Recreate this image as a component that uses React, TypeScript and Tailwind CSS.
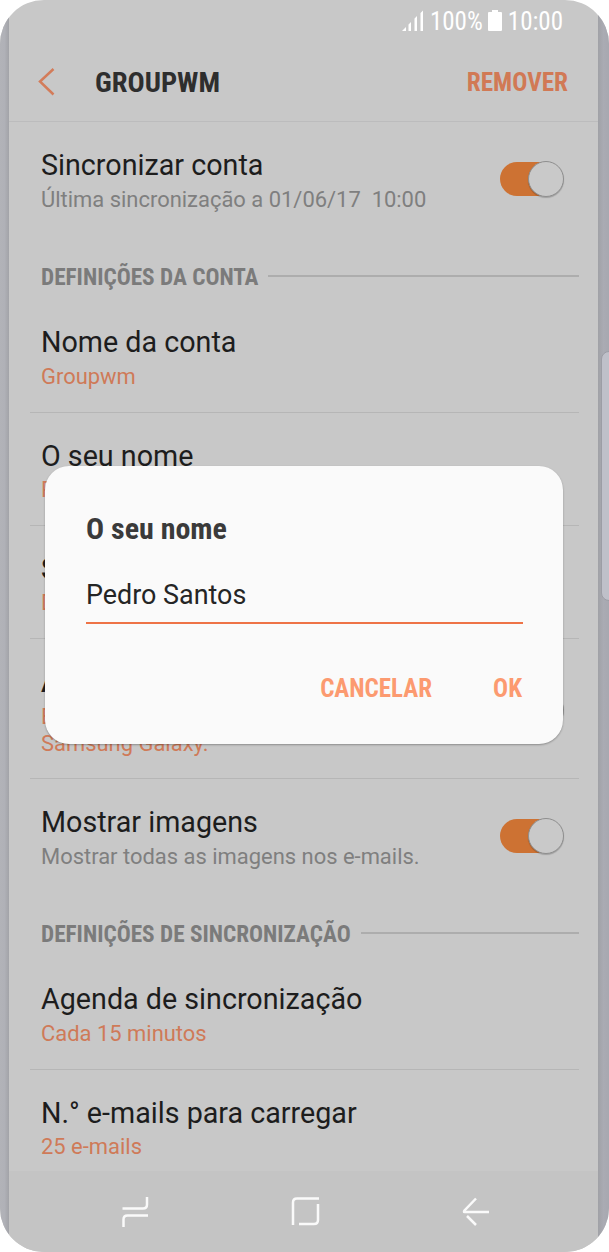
import { useState } from "react";
import clsx from "clsx";

interface SettingRowProps {
    title: string;
    summary: string;
    muted?: boolean;
    divider?: boolean;
    tall?: boolean;
    strong?: boolean;
    toggle?: boolean;
}

export default function App() {
    const [name, setName] = useState("Pedro Santos");

    return (
        <div className="w-[609px] h-[1252px] bg-white font-['Roboto','Liberation_Sans',sans-serif]">
            <div className="relative flex h-full w-full overflow-hidden rounded-[44px] bg-[#c8c8c8]">
                <div className="w-[9px] shrink-0 bg-linear-to-r from-[#b2b3b8] via-[#b0b1b7] to-[#a2a3a8]" />

                <div className="flex min-w-0 flex-1 flex-col">
                    <StatusBar />
                    <Header />

                    <main className="flex-1 overflow-hidden pr-[19px] pl-[21px]">
                        <SettingRow title="Sincronizar conta" summary={"Última sincronização a 01/06/17\u00a0 10:00"} muted toggle />
                        <SectionTitle>DEFINIÇÕES DA CONTA</SectionTitle>
                        <SettingRow title="Nome da conta" summary="Groupwm" divider />
                        <SettingRow title="O seu nome" summary="Pedro Santos" divider />
                        <SettingRow title="Sempre Cc/Bcc para mim" summary="Desativado" divider strong />
                        <SettingRow title="Assinatura" summary={"Enviado do meu smartphone\nSamsung Galaxy."} divider tall strong toggle />
                        <SettingRow title="Mostrar imagens" summary="Mostrar todas as imagens nos e-mails." muted toggle />
                        <SectionTitle>DEFINIÇÕES DE SINCRONIZAÇÃO</SectionTitle>
                        <SettingRow title="Agenda de sincronização" summary="Cada 15 minutos" divider />
                        <SettingRow title="N.° e-mails para carregar" summary="25 e-mails" />
                    </main>

                    <NavBar />
                </div>

                <div className="w-[11px] shrink-0 bg-linear-to-r from-[#a0a1a6] via-[#aaabb3] to-[#a7a8b0]" />

                {/* Edge panel handle */}
                <div className="absolute top-[351px] left-[601px] h-[250px] w-4 rounded-l-lg border border-[#9c9da5] bg-[#bfc0c9]" />

                {/* Dialog */}
                <div className="absolute top-[466px] left-[45px] flex h-[278px] w-[518px] flex-col rounded-[24px] bg-[#fafafa] px-[41px] pt-[45px] shadow-[0_1px_2px_rgba(0,0,0,0.3)]">
                    <h2 className="h-9 text-[30px] leading-9 font-bold text-[#3a3a3a] font-['Roboto_Condensed','Roboto',sans-serif] [font-stretch:75%]">
                        O seu nome
                    </h2>
                    <input
                        value={name}
                        onChange={(e) => setName(e.target.value)}
                        className="mt-[19px] h-[58px] w-[437px] border-b-2 border-[#ee7347] bg-transparent pt-0.5 text-[26.9px] text-[#252525] outline-none"
                    />
                    <div className="mt-[47px] flex justify-end gap-[61px] text-[25px] leading-9 font-bold text-[#fc9a70] font-['Roboto_Condensed','Roboto',sans-serif] [font-stretch:75%]">
                        <button>CANCELAR</button>
                        <button>OK</button>
                    </div>
                </div>
            </div>
        </div>
    );
}

function StatusBar() {
    return (
        <div className="flex h-[42px] shrink-0 items-center justify-end pr-[35px] text-[25px] text-white font-['Roboto_Condensed','Roboto',sans-serif] [font-stretch:75%]">
            <svg width="22" height="22" viewBox="0 0 22 22" fill="currentColor">
                <path d="M0 21 4 17v4zM6.500 14.500l2.500-2.500V21H6.500zM12.500 8.500l2.500-2.500V21h-2.500zM18.500 3 21 .5V21h-2.500z" />
            </svg>
            <span className="ml-[6px] pt-0.5">100%</span>
            <svg className="ml-[5px]" width="14" height="22" viewBox="0 0 14 22" fill="currentColor">
                <path d="M4 0h6v2h3q1 0 1 1v17q0 1-1 1H1q-1 0-1-1V3q0-1 1-1h3z" />
            </svg>
            <span className="ml-[6px] pt-0.5">10:00</span>
        </div>
    );
}

function Header() {
    return (
        <header className="flex h-[80px] shrink-0 items-center border-b border-[#bcbcbd] pr-[30px] pl-[29px] font-bold font-['Roboto_Condensed','Roboto',sans-serif] [font-stretch:75%]">
            <svg width="17" height="28" viewBox="0 0 17 28" fill="none" stroke="#d37c5a" strokeWidth="2.500">
                <path d="M15.500 1 2 13.500 15.500 26.500" />
            </svg>
            <h1 className="ml-10 pt-[3px] text-[28.5px] text-[#2e2e2e]">GROUPWM</h1>
            <button className="ml-auto pt-0.5 text-[25.2px] text-[#d17955]">REMOVER</button>
        </header>
    );
}

function SectionTitle({ children }: { children: string }) {
    return (
        <div className="flex h-[64px] items-center gap-2.5 pt-5 pl-[11px] text-[23.25px] font-bold text-[#7b7b7b] font-['Roboto_Condensed','Roboto',sans-serif] [font-stretch:75%]">
            <span className="whitespace-nowrap">{children}</span>
            <div className="-mt-0.5 h-0.5 flex-1 bg-[#adadad]" />
        </div>
    );
}

function SettingRow({ title, summary, muted, divider, tall, strong, toggle }: SettingRowProps) {
    return (
        <div
            className={clsx(
                "flex justify-between pr-[15px] pl-[11px]",
                tall ? "h-[140px]" : "h-[113.3px]",
                divider && "border-b border-[#b6b6b6]"
            )}
        >
            <div className="whitespace-nowrap pt-[25px]">
                <div className={clsx("h-9 text-[28.7px] leading-9 text-[#1d1d1d]", strong && "font-medium")}>{title}</div>
                <div className={clsx("whitespace-pre pt-[2.5px] text-[21.95px] leading-[27px]", muted ? "text-[#7f7f7f]" : "text-[#cf7a58]")}>
                    {summary}
                </div>
            </div>
            {toggle && <Toggle className={tall ? "mt-[52px]" : "mt-[38px]"} />}
        </div>
    );
}

function Toggle({ className }: { className: string }) {
    return (
        <div className={clsx("flex h-[37px] w-[64px] shrink-0 items-center", className)}>
            <div className="h-[34px] w-[45px] rounded-l-full bg-[#cd7233]" />
            <div className="-ml-[17px] size-9 shrink-0 rounded-full border border-[#8f8f8f] bg-[#c9c9c9] shadow-[0_1px_1px_rgba(0,0,0,0.2)]" />
        </div>
    );
}

function NavBar() {
    return (
        <nav className="flex h-[81px] shrink-0 items-center bg-[#c4c4c4] pl-[112px] text-[#fafafa]">
            <svg width="30" height="32" viewBox="0 0 30 32" fill="none" stroke="currentColor" strokeWidth="2.500">
                <path d="M1.500 12.500H22q4 0 4-4V1M27 19.500H6.500q-4 0-4 4V31" />
            </svg>
            <svg className="ml-[140px]" width="30" height="30" viewBox="0 0 30 30" fill="none" stroke="currentColor" strokeWidth="2.500">
                <path d="M2 28V5.500q0-4 4-4H28M27 7v16q0 4-4 4H8" />
            </svg>
            <svg className="ml-[141px]" width="28" height="30" viewBox="0 0 28 30" fill="none" stroke="currentColor" strokeWidth="2.500">
                <path d="M14 1.500 2.500 13.500q-1 1.500 0 1.500H27M5 19l9 9" />
            </svg>
        </nav>
    );
}
